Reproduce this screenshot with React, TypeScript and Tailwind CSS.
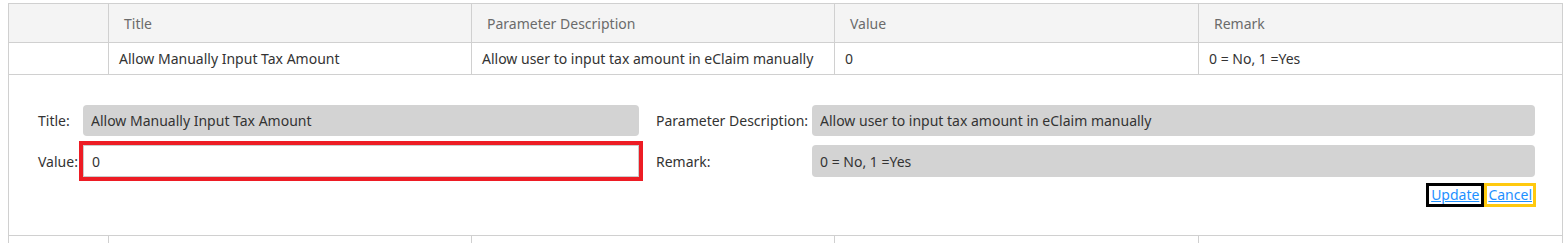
const headers = ["", "Title", "Parameter Description", "Value", "Remark"];

const row = {
  title: "Allow Manually Input Tax Amount",
  description: "Allow user to input tax amount in eClaim manually",
  value: "0",
  remark: "0 = No, 1 =Yes",
};

const cell = "border border-[#d0d0d0] px-[10px] text-left font-normal";

export default function App() {
  return (
    <div className="bg-white pt-[3px] pl-[8px] pr-[5px] h-[243px] overflow-hidden font-['Noto_Sans',sans-serif] text-[14px]">
      <table className="w-full table-fixed border-collapse">
        <colgroup>
          <col className="w-[100px]" />
          <col className="w-[363px]" />
          <col className="w-[363px]" />
          <col className="w-[364px]" />
          <col />
        </colgroup>
        <thead>
          <tr className="bg-[#f4f4f4] text-[#6b6b6b] h-[39px]">
            {headers.map((h, i) => (
              <th key={i} className={`${cell} px-[15px]`}>
                {h}
              </th>
            ))}
          </tr>
        </thead>
        <tbody className="text-[#333]">
          <tr className="h-[32px]">
            <td className={cell}></td>
            <td className={cell}>{row.title}</td>
            <td className={cell}>{row.description}</td>
            <td className={cell}>{row.value}</td>
            <td className={cell}>{row.remark}</td>
          </tr>
          <tr>
            <td colSpan={5} className="border border-[#d0d0d0] h-[161px] pt-[30px] pl-[29px] pr-[27px] align-top">
              <div className="flex gap-[17px]">
                <div className="flex flex-col gap-[9px] w-[601px]">
                  <div className="flex items-center">
                    <label className="w-[45px] text-[#333]">Title:</label>
                    <input
                      readOnly
                      value={row.title}
                      className="flex-1 h-[31px] rounded-[4px] bg-[#d3d3d3] px-[8px] text-[#333] outline-none"
                    />
                  </div>
                  <div className="flex items-center">
                    <label className="w-[45px] text-[#333]">Value:</label>
                    <input
                      defaultValue={row.value}
                      className="flex-1 h-[32px] bg-white px-[8px] text-[#333] border border-[#ccc] outline-4 outline-[#ed1c24]"
                    />
                  </div>
                </div>
                <div className="flex flex-col gap-[9px] flex-1">
                  <div className="flex items-center">
                    <label className="w-[156px] text-[#333]">Parameter Description:</label>
                    <input
                      readOnly
                      value={row.description}
                      className="flex-1 h-[31px] rounded-[4px] bg-[#d3d3d3] px-[8px] text-[#333] outline-none"
                    />
                  </div>
                  <div className="flex items-center">
                    <label className="w-[156px] text-[#333]">Remark:</label>
                    <input
                      readOnly
                      value={row.remark}
                      className="flex-1 h-[32px] rounded-[4px] bg-[#d3d3d3] px-[8px] text-[#333] outline-none"
                    />
                  </div>
                </div>
              </div>
              <div className="flex justify-end mt-[6px] -mr-[1px]">
                <a href="#" className="text-[#1e90ff] underline border-[3px] border-black px-[2px] leading-[18px]">
                  Update
                </a>
                <a href="#" className="text-[#1e90ff] underline border-[3px] border-[#ffc90e] px-[1px] leading-[17px]">
                  Cancel
                </a>
              </div>
            </td>
          </tr>
          <tr className="h-[32px]">
            <td className={cell}></td>
            <td className={cell}></td>
            <td className={cell}></td>
            <td className={cell}></td>
            <td className={cell}></td>
          </tr>
        </tbody>
      </table>
    </div>
  );
}
